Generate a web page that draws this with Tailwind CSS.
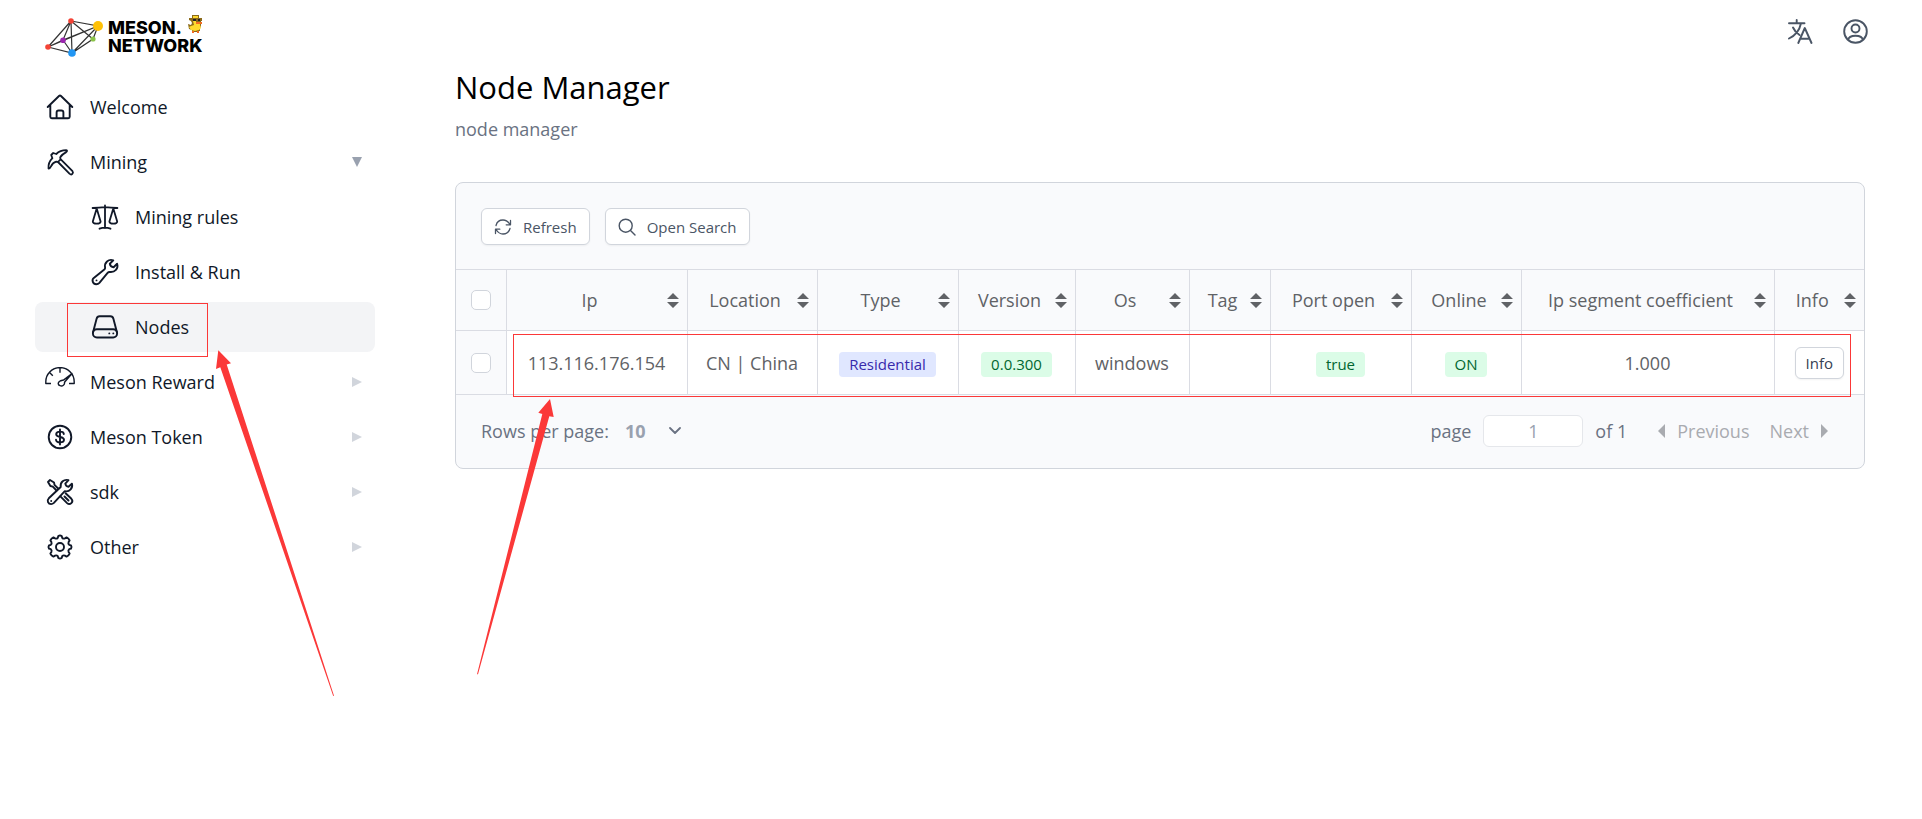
<!DOCTYPE html>
<html lang="en">
<head>
    <meta charset="UTF-8">
    <meta name="viewport" content="width=device-width, initial-scale=1.0">
    <title>Node Manager - Meson Network</title>
    <script src="https://cdn.jsdelivr.net/npm/@tailwindcss/browser@4"></script>
</head>
<body class="relative min-h-screen overflow-x-hidden bg-white font-['Open_Sans','Noto_Sans',sans-serif] text-[18px] leading-[30px] text-gray-900">
    <div class="flex">
        <!-- Sidebar -->
        <aside class="w-[375px] shrink-0 pl-[35px]">
            <a href="#" class="flex h-[82px] items-start gap-1 pt-[14px] pl-[9px]">
                <svg class="h-[44px] w-[60px]" viewBox="44 14 60 44" fill="none">
                    <path d="M71 21 98 26 93 39 72 53 48 47ZM71 21 72 53M71 21 93 39M71 21 63 40M98 26 63 40M98 26 48 47M98 26 72 53M63 40 72 53M63 40 48 47" stroke="#333" stroke-width="1.2"/>
                    <circle cx="71" cy="21" r="2.8" fill="#f44336"/>
                    <circle cx="98" cy="26" r="5" fill="#ffc107"/>
                    <circle cx="93" cy="39" r="2.6" fill="#8bc34a"/>
                    <circle cx="63" cy="40.3" r="2.8" fill="#9c27b0"/>
                    <circle cx="48" cy="47" r="2.8" fill="#f44336"/>
                    <circle cx="72" cy="53" r="3.8" fill="#2196f3"/>
                </svg>
                <span class="pt-[5px] font-['Inter',sans-serif] text-[18px] leading-[18px] font-extrabold text-black">
                    <span class="flex items-start">MESON.
                        <svg class="-mt-1 ml-1.5 h-[18px] w-[14px]" viewBox="0 0 14 18">
                            <path d="M4 0h7v3h3v3h-1v5l-1 2v3h-2v1H4v-2L1 14 0 9l3 1 1-2-1-2-2-1V3h3z" fill="#8a6a1a"/>
                            <path d="M5 1h5v2H5zM5 6h3v2h4v2l1 3-2 2-4 1-4-1-2-3 2-1 3-1z" fill="#ffd92e"/>
                            <path d="M5 4h3v2H5zM10 4h2v2h-2z" fill="#222"/>
                            <path d="M8 7h6v2H8zM4 16h2v2H4zM9 16h2v2H9z" fill="#f36b21"/>
                        </svg>
                    </span>
                    <span class="block">NETWORK</span>
                </span>
            </a>

            <nav class="flex flex-col gap-[5px] text-gray-900">
                <a href="#" class="flex h-[50px] items-center gap-[15px] rounded-lg px-[10px]">
                    <svg class="size-[30px]" viewBox="0 0 30 30" fill="none" stroke="currentColor" stroke-width="1.9" stroke-linecap="round" stroke-linejoin="round">
                        <path d="M2.7 15 14 4q1-1 2 0l11.3 11M5.3 13v11.8q0 1.5 1.5 1.5h16.4q1.5 0 1.5-1.5V13M11.6 26v-5.500a2 2 0 0 1 2-2h2.800a2 2 0 0 1 2 2V26"/>
                    </svg>
                    <span>Welcome</span>
                </a>
                <a href="#" class="flex h-[50px] items-center gap-[15px] rounded-lg px-[10px]">
                    <svg class="size-[30px]" viewBox="0 0 30 30" fill="none" stroke="currentColor" stroke-width="1.8" stroke-linecap="round" stroke-linejoin="round">
                        <path d="M21.3 3.200C17 3.300 13.700 4.600 11.300 7L8.200 6 6.200 8l1.200 3.200C4.600 14 3.200 18 3.500 21.500c1.200.2 1.800-.8 2.500-2.200 1.200-2.500 3-4 5.200-4.600l1.800.3 2.500-2.600-.3-2c1-2.200 2.900-3.600 6-5.300 1-.7 1.100-1.900.1-1.900zM13 15l11.700 11.900c1.900 1.500 4.200-.8 2.800-2.700L15.800 12.400"/>
                    </svg>
                    <span class="flex-1">Mining</span>
                    <svg class="mr-[3px] size-[10px] text-gray-400" viewBox="0 0 10 10"><path d="M0 0h10L5 10z" fill="currentColor"/></svg>
                </a>
                <a href="#" class="flex h-[50px] items-center gap-[15px] rounded-lg pr-[10px] pl-[55px]">
                    <svg class="size-[30px]" viewBox="0 0 30 30" fill="none" stroke="currentColor" stroke-width="1.8" stroke-linecap="round" stroke-linejoin="round">
                        <path d="M2.600 6q6.400 0 12.400-.8 6 .8 12.400.8M15 3.500V26M9.500 26.700q5.500-2 11 0M6.700 6.500 2.800 19.500q0 2.200 3.900 2.200t3.900-2.200zM23.300 6.500l-3.900 13q0 2.200 3.900 2.200t3.900-2.200z"/>
                    </svg>
                    <span>Mining rules</span>
                </a>
                <a href="#" class="flex h-[50px] items-center gap-[15px] rounded-lg pr-[10px] pl-[55px]">
                    <svg class="size-[30px]" viewBox="0 0 30 30" fill="none" stroke="currentColor" stroke-width="1.9" stroke-linecap="round" stroke-linejoin="round">
                        <path d="M23.300 3.300c-4.800-1.600-9.200 2.200-8.200 7.300.1.800-.2 1.300-.8 1.900L3.800 20.900c-2.500 2.200-.9 6.200 2.400 6.300 1.300 0 2.300-.4 3.200-1.400l8.200-9.900c.6-.7 1.300-1 2.200-.9 5 .6 8.900-3.400 7.300-8.200l-3.500 3.400c-1.800-.2-3.400-1.500-3.800-3.500z"/>
                        <path d="M6.500 23.400h.01"/>
                    </svg>
                    <span>Install &amp; Run</span>
                </a>
                <a href="#" aria-current="page" class="flex h-[50px] items-center gap-[15px] rounded-lg bg-gray-100 pr-[10px] pl-[55px]">
                    <svg class="size-[30px]" viewBox="0 0 30 30" fill="none" stroke="currentColor" stroke-width="1.9" stroke-linecap="round" stroke-linejoin="round">
                        <path d="M3 20.500 6.600 6.700Q7.200 4.300 9.600 4.300h10.800q2.400 0 3 2.400L27 20.500"/>
                        <rect x="2.900" y="17.300" width="24.200" height="8.200" rx="4"/>
                        <path d="M19.300 21.400h.01M23.300 21.400h.01"/>
                    </svg>
                    <span>Nodes</span>
                </a>
                <a href="#" class="flex h-[50px] items-center gap-[15px] rounded-lg px-[10px]">
                    <svg class="size-[30px]" viewBox="0 0 30 30" fill="none" stroke="currentColor" stroke-width="1.4" stroke-linejoin="round">
                        <path d="M6 16.500H.8v-1.700a14.200 14.200 0 0 1 28.400 0v1.700H24M15 .8v5M4.800 5.700l3 3M27 6.500l-7.500 8.700c.5 2.600-2 4.500-4.500 3.500-2.300-.8-2.300-3.200-.4-4.400 1.100-.8 2.700-.9 3.900-1.200z"/>
                    </svg>
                    <span class="flex-1">Meson Reward</span>
                    <svg class="mr-[3px] size-[10px] text-gray-300" viewBox="0 0 10 10"><path d="M0 0v10l10-5z" fill="currentColor"/></svg>
                </a>
                <a href="#" class="flex h-[50px] items-center gap-[15px] rounded-lg px-[10px]">
                    <svg class="size-[30px]" viewBox="0 0 30 30" fill="none" stroke="currentColor" stroke-width="1.9" stroke-linecap="round" stroke-linejoin="round">
                        <circle cx="15" cy="15" r="11.300"/>
                        <path d="M15 7.500v15M18.800 12c0-1.500-1.600-2.400-3.800-2.400s-3.800 1-3.800 2.600c0 3.900 7.800 1.600 7.800 5.600 0 1.600-1.700 2.600-4 2.600s-4-1-4-2.600"/>
                    </svg>
                    <span class="flex-1">Meson Token</span>
                    <svg class="mr-[3px] size-[10px] text-gray-300" viewBox="0 0 10 10"><path d="M0 0v10l10-5z" fill="currentColor"/></svg>
                </a>
                <a href="#" class="flex h-[50px] items-center gap-[15px] rounded-lg px-[10px]">
                    <svg class="size-[30px]" viewBox="0 0 30 30" fill="none" stroke="currentColor" stroke-width="1.9" stroke-linecap="round" stroke-linejoin="round">
                        <path d="M23.500 3.200c-4.500-1.300-8.500 2-7.800 6.800L3.800 21.300c-2.300 2.300-.6 5.800 2.300 5.800 1.200 0 2-.4 2.800-1.200L19.800 14.200c4.900.9 8.400-3.100 7.100-7.600l-3.400 3.200c-1.600-.2-2.900-1.400-3.200-3.200z"/>
                        <path d="M13.400 11.700 9.500 7.900 9 5.500 5 3 3 5l2.400 4 2.400.6 3.700 3.900M15.400 19.400l6.700 6.700c2.900 2.700 7-1.300 4.300-4.300l-5.800-5.600M19.500 19.500l4 4M6.200 24h.01"/>
                    </svg>
                    <span class="flex-1">sdk</span>
                    <svg class="mr-[3px] size-[10px] text-gray-300" viewBox="0 0 10 10"><path d="M0 0v10l10-5z" fill="currentColor"/></svg>
                </a>
                <a href="#" class="flex h-[50px] items-center gap-[15px] rounded-lg px-[10px]">
                    <svg class="size-[30px]" viewBox="0 0 30 30" fill="none" stroke="currentColor" stroke-width="1.9" stroke-linecap="round" stroke-linejoin="round">
                        <path d="M13.300 4Q15 3 16.700 4L17.200 5.800Q18.300 7.100 19.900 6.400L21.600 5.400Q23.700 6.300 24.600 8.400L23.600 10.100Q22.900 11.700 24.200 12.800L26 13.300Q27 15 26 16.700L24.200 17.200Q22.900 18.300 23.600 19.900L24.600 21.600Q23.700 23.700 21.600 24.600L19.900 23.600Q18.300 22.900 17.200 24.200L16.700 26Q15 27 13.300 26L12.800 24.200Q11.700 22.900 10.100 23.600L8.400 24.600Q6.300 23.700 5.400 21.600L6.400 19.900Q7.100 18.300 5.800 17.200L4 16.700Q3 15 4 13.300L5.800 12.800Q7.100 11.700 6.400 10.100L5.400 8.400Q6.300 6.300 8.400 5.400L10.100 6.400Q11.700 7.100 12.800 5.800Z"/>
                        <circle cx="15" cy="15" r="4"/>
                    </svg>
                    <span class="flex-1">Other</span>
                    <svg class="mr-[3px] size-[10px] text-gray-300" viewBox="0 0 10 10"><path d="M0 0v10l10-5z" fill="currentColor"/></svg>
                </a>
            </nav>
        </aside>

        <div class="min-w-0 flex-1">
            <!-- Top bar -->
            <header class="flex h-[62px] items-center justify-end gap-[30px] pr-[54px] text-gray-600">
                <button type="button" aria-label="Language">
                    <svg class="size-[25px]" viewBox="0 0 25 25" fill="none" stroke="currentColor" stroke-width="1.9" stroke-linecap="round" stroke-linejoin="round">
                        <path d="M1 4.300h15.500M8.700 1v3.300M13 4.300C11.500 11.500 7.500 16.500 1 19.500M5 8.500c1.300 3 3.500 5.500 6.500 7.500M10.300 24l6.500-15 6.700 15M12.500 19.700h9"/>
                    </svg>
                </button>
                <button type="button" aria-label="Account">
                    <svg class="size-[25px]" viewBox="0 0 25 25" fill="none" stroke="currentColor" stroke-width="1.9">
                        <circle cx="12.500" cy="12.500" r="11.300"/>
                        <circle cx="12.500" cy="9.500" r="4"/>
                        <path d="M5 21.200c.5-3 3.300-4.500 7.500-4.500s7 1.500 7.500 4.500"/>
                    </svg>
                </button>
            </header>

            <main class="pr-[57px] pl-[80px]">
                <h1 class="text-[31px] leading-[50px] text-black">Node Manager</h1>
                <p class="mt-0.5 text-gray-500">node manager</p>

                <section class="mt-[38px] overflow-hidden rounded-lg border border-gray-300 bg-[#f9fafc]">
                    <div class="flex gap-[15px] px-[25px] pt-[25px] pb-6 text-[15px] text-gray-600">
                        <button type="button" class="flex h-[37px] items-center gap-[11px] rounded-md border border-gray-300 bg-white px-3 shadow-xs">
                            <svg class="size-[18px]" viewBox="0 0 18 18" fill="none" stroke="currentColor" stroke-width="1.3" stroke-linecap="round" stroke-linejoin="round">
                                <path d="M2 7.500C3 3.500 6 2 9 2c2.800 0 5 1.300 7 4.500M16.500 2.500v4.300h-4.300M16 10.500C15 14.500 12 16 9 16c-2.800 0-5-1.300-7-4.500M1.500 15.500v-4.300h4.300"/>
                            </svg>
                            <span>Refresh</span>
                        </button>
                        <button type="button" class="flex h-[37px] items-center gap-[11px] rounded-md border border-gray-300 bg-white px-3 shadow-xs">
                            <svg class="size-[18px]" viewBox="0 0 18 18" fill="none" stroke="currentColor" stroke-width="1.4" stroke-linecap="round">
                                <circle cx="7.700" cy="7.700" r="6.500"/><path d="m12.500 12.500 4.500 4.500"/>
                            </svg>
                            <span>Open Search</span>
                        </button>
                    </div>

                    <table class="w-full table-fixed border-collapse text-[#606266]">
                        <thead>
                            <tr class="h-[61px] border-y border-[#dadce3]">
                                <th class="w-[50px] border-r border-[#dadce3] p-0"><input type="checkbox" aria-label="Select all rows" class="mx-auto block size-5 appearance-none rounded-[5px] border border-gray-300 bg-white"></th>
                                <th class="w-[181px] border-r border-[#dadce3] p-0 font-normal"><div class="flex items-center pr-2 pl-1.5"><span class="flex-1">Ip</span><svg class="h-[15px] w-3" viewBox="0 0 12 15" fill="currentColor"><path d="M6 0l6 6H0zM0 9h12l-6 6z"/></svg></div></th>
                                <th class="w-[130px] border-r border-[#dadce3] p-0 font-normal"><div class="flex items-center pr-2 pl-1.5"><span class="flex-1">Location</span><svg class="h-[15px] w-3" viewBox="0 0 12 15" fill="currentColor"><path d="M6 0l6 6H0zM0 9h12l-6 6z"/></svg></div></th>
                                <th class="w-[141px] border-r border-[#dadce3] p-0 font-normal"><div class="flex items-center pr-2 pl-1.5"><span class="flex-1">Type</span><svg class="h-[15px] w-3" viewBox="0 0 12 15" fill="currentColor"><path d="M6 0l6 6H0zM0 9h12l-6 6z"/></svg></div></th>
                                <th class="w-[117px] border-r border-[#dadce3] p-0 font-normal"><div class="flex items-center pr-2 pl-1.5"><span class="flex-1">Version</span><svg class="h-[15px] w-3" viewBox="0 0 12 15" fill="currentColor"><path d="M6 0l6 6H0zM0 9h12l-6 6z"/></svg></div></th>
                                <th class="w-[114px] border-r border-[#dadce3] p-0 font-normal"><div class="flex items-center pr-2 pl-1.5"><span class="flex-1">Os</span><svg class="h-[15px] w-3" viewBox="0 0 12 15" fill="currentColor"><path d="M6 0l6 6H0zM0 9h12l-6 6z"/></svg></div></th>
                                <th class="w-[81px] border-r border-[#dadce3] p-0 font-normal"><div class="flex items-center pr-2 pl-1.5"><span class="flex-1">Tag</span><svg class="h-[15px] w-3" viewBox="0 0 12 15" fill="currentColor"><path d="M6 0l6 6H0zM0 9h12l-6 6z"/></svg></div></th>
                                <th class="w-[141px] border-r border-[#dadce3] p-0 font-normal"><div class="flex items-center pr-2 pl-1.5"><span class="flex-1">Port open</span><svg class="h-[15px] w-3" viewBox="0 0 12 15" fill="currentColor"><path d="M6 0l6 6H0zM0 9h12l-6 6z"/></svg></div></th>
                                <th class="w-[110px] border-r border-[#dadce3] p-0 font-normal"><div class="flex items-center pr-2 pl-1.5"><span class="flex-1">Online</span><svg class="h-[15px] w-3" viewBox="0 0 12 15" fill="currentColor"><path d="M6 0l6 6H0zM0 9h12l-6 6z"/></svg></div></th>
                                <th class="w-[253px] border-r border-[#dadce3] p-0 font-normal"><div class="flex items-center pr-2 pl-1.5"><span class="flex-1">Ip segment coefficient</span><svg class="h-[15px] w-3" viewBox="0 0 12 15" fill="currentColor"><path d="M6 0l6 6H0zM0 9h12l-6 6z"/></svg></div></th>
                                <th class="w-[90px] p-0 font-normal"><div class="flex items-center pr-2 pl-1.5"><span class="flex-1">Info</span><svg class="h-[15px] w-3" viewBox="0 0 12 15" fill="currentColor"><path d="M6 0l6 6H0zM0 9h12l-6 6z"/></svg></div></th>
                            </tr>
                        </thead>
                        <tbody>
                            <tr class="h-[64px] border-b border-[#dadce3] bg-white text-center">
                                <td class="border-r border-[#dadce3] bg-[#f9fafc] p-0"><input type="checkbox" aria-label="Select row" class="mx-auto block size-5 appearance-none rounded-[5px] border border-gray-300 bg-white"></td>
                                <td class="border-r border-[#dadce3] p-0">113.116.176.154</td>
                                <td class="border-r border-[#dadce3] p-0">CN | China</td>
                                <td class="border-r border-[#dadce3] p-0"><span class="inline-block rounded bg-indigo-100 px-[10px] text-[15px] leading-[25px] text-indigo-800">Residential</span></td>
                                <td class="border-r border-[#dadce3] p-0"><span class="inline-block rounded bg-green-100 px-[10px] text-[15px] leading-[25px] text-green-800">0.0.300</span></td>
                                <td class="border-r border-[#dadce3] p-0">windows</td>
                                <td class="border-r border-[#dadce3] p-0"></td>
                                <td class="border-r border-[#dadce3] p-0"><span class="inline-block rounded bg-green-100 px-[10px] text-[15px] leading-[25px] text-green-800">true</span></td>
                                <td class="border-r border-[#dadce3] p-0"><span class="inline-block rounded bg-green-100 px-[10px] text-[15px] leading-[25px] text-green-800">ON</span></td>
                                <td class="border-r border-[#dadce3] p-0">1.000</td>
                                <td class="p-0"><button type="button" class="rounded-md border border-gray-300 bg-white px-[10px] text-[15px] leading-[30px] text-gray-700 shadow-xs">Info</button></td>
                            </tr>
                        </tbody>
                    </table>

                    <div class="flex h-[73px] items-center justify-between pr-[36px] pb-px pl-[25px] text-gray-500">
                        <div class="flex items-center gap-4">
                            <label for="rows-per-page">Rows per page:</label>
                            <div class="relative">
                                <select id="rows-per-page" class="w-[60px] appearance-none bg-transparent font-bold text-gray-400">
                                    <option>10</option>
                                    <option>25</option>
                                    <option>50</option>
                                </select>
                                <svg class="pointer-events-none absolute top-[11px] right-1 h-2 w-3" viewBox="0 0 12 8" fill="none" stroke="currentColor" stroke-width="1.8" stroke-linecap="round" stroke-linejoin="round"><path d="m1 1 5 5 5-5"/></svg>
                            </div>
                        </div>
                        <div class="flex items-center">
                            <label for="page-number">page</label>
                            <input id="page-number" type="text" value="1" disabled class="mx-3 h-8 w-[100px] rounded-md border border-gray-200 bg-white text-center text-gray-400">
                            <span>of 1</span>
                            <button type="button" disabled class="ml-[31px] flex items-center gap-3 text-[#a9abb0]">
                                <svg class="h-[14px] w-[7px]" viewBox="0 0 7 14"><path d="M7 0v14L0 7z" fill="currentColor"/></svg>
                                Previous
                            </button>
                            <button type="button" disabled class="ml-5 flex items-center gap-3 text-[#a9abb0]">
                                Next
                                <svg class="h-[14px] w-[7px]" viewBox="0 0 7 14"><path d="M0 0v14l7-7z" fill="currentColor"/></svg>
                            </button>
                        </div>
                    </div>
                </section>
            </main>
        </div>
    </div>

    <!-- Highlight boxes and arrows -->
    <svg class="pointer-events-none absolute top-0 left-0 h-[819px] w-[1922px]" viewBox="0 0 1922 819" fill="none">
        <rect x="67.5" y="303.5" width="140" height="53" stroke="#fb3838"/>
        <rect x="513.5" y="334.5" width="1337" height="62" stroke="#fb3838"/>
        <path d="M218.3 350.3 216 369 220.300 367.300 333.200 695.900 334 695.700 226.700 364.500 231 363.300z" fill="#fb3838"/>
        <path d="M550 399 538.300 412.700 542.300 414 477 674.300 478 674.300 549.300 416.300 553.700 417z" fill="#fb3838"/>
    </svg>
</body>
</html>
